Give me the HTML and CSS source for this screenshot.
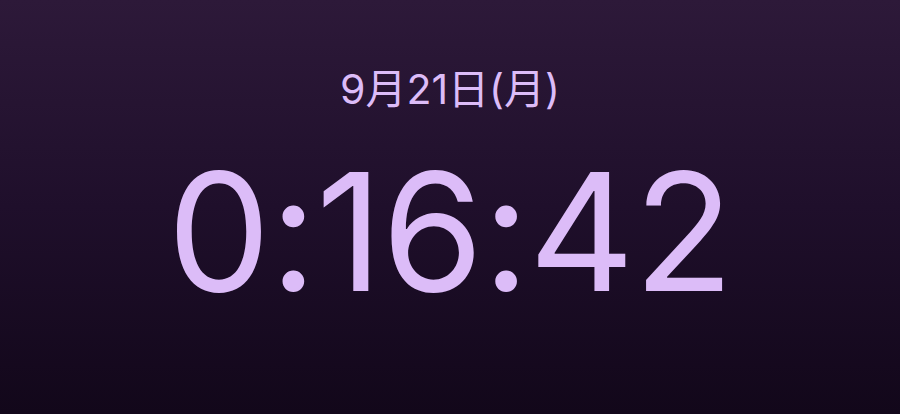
FILE: index.html
```html
<!DOCTYPE html>
<html lang="ja">
<head>
<meta charset="utf-8">
<link rel="stylesheet" href="styles.css">
</head>
<body>
<main class="clock">
  <div class="date">9月21日(月)</div>
  <div class="time">0:16:42</div>
</main>
</body>
</html>
```
FILE: styles.css
```css
html, body {
  margin: 0;
  padding: 0;
  height: 100%;
}
body {
  background: linear-gradient(to bottom, #2d1939 0%, #1f0f2b 50%, #12071a 100%);
  font-family: Inter, "Noto Sans CJK JP", sans-serif;
  color: #dcbcf8;
}
.clock {
  height: 414px;
  display: flex;
  flex-direction: column;
  align-items: center;
  padding-top: 62px;
  box-sizing: border-box;
}
.date {
  font-size: 41px;
  line-height: 54px;
  letter-spacing: 0;
}
.time {
  margin-top: 31px;
  font-size: 164px;
  line-height: 170px;
  letter-spacing: -1px;
}
```
